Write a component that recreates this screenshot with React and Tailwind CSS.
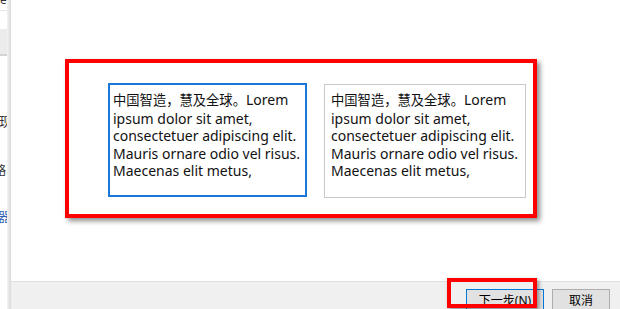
import React from 'react';

const SampleText = () => (
  <>
    <span className="text-[13.3px]">中国智造，慧及全球。</span>Lorem ipsum dolor sit amet, consectetuer adipiscing elit. Mauris ornare odio vel risus. Maecenas elit metus,
  </>
);

const font = "font-['Segoe_UI','Noto_Sans','Noto_Sans_CJK_SC',sans-serif]";

const App = () => {
  return (
    <div className={`relative flex w-[620px] h-[309px] overflow-hidden bg-white ${font} text-black`}>
      {/* 后面窗口露出的一条 */}
      <div className="relative w-[11px] shrink-0 overflow-hidden bg-white">
        <div className="absolute left-0 top-[-6px] text-[12px] leading-[12px] text-[#333]">ect</div>
        <div className="absolute left-0 top-[10px] w-full h-px bg-[#e6e6e6]"></div>
        <div className="absolute left-0 top-[29px] w-full h-[27px] bg-[#ebebeb] border-b-2 border-[#d4d4d4]"></div>
        <div className="absolute left-[-1px] top-[114px] text-[13px] leading-[14px] text-[#333]">现</div>
        <div className="absolute left-[-6px] top-[164px] text-[12px] leading-[14px] text-[#333]">略</div>
        <div className="absolute left-[-2px] top-[209px] text-[13px] leading-[14px] text-[#2a5fb5]">器</div>
        <div className="absolute right-0 top-0 h-full w-[4px] bg-gradient-to-r from-[#f3f3f3] to-[#d9d9d9]"></div>
      </div>

      {/* 对话框 */}
      <div className="flex flex-col flex-1 min-w-0">
        <div className="flex-1 pl-[54px] pt-[59px]">
          <div className="w-[472px] h-[159px] border-4 border-[#ff0000] shadow-[3px_3px_5px_rgba(0,0,0,0.45)] pl-[39px] pt-[20px] flex gap-[17px]">
            <div className="w-[199px] h-[114px] border-2 border-[#1c78d6] pl-[3px] pt-[6px] text-[14px] leading-[17.5px] text-[#111]">
              <SampleText />
            </div>
            <div className="w-[202px] h-[114px] mt-px border border-[#c9c9c9] pl-[6px] pt-[6px] text-[14px] leading-[17.5px] text-[#111]">
              <SampleText />
            </div>
          </div>
        </div>

        <div className="h-[28px] shrink-0 bg-[#f0f0f0] border-t border-[#dfdfdf] flex justify-end pr-[10px] pt-[7px] gap-[8px] text-[12px]">
          <button className="w-[78px] h-[23px] border border-[#0078d7] bg-[#e1e1e1] leading-[21px] text-[#000]">
            下一步(N)
          </button>
          <button className="w-[58px] h-[23px] border border-[#adadad] bg-[#e1e1e1] leading-[21px] text-[#000]">
            取消
          </button>
        </div>
      </div>

      {/* 红框标注 */}
      <div className="absolute left-[447px] top-[278px] w-[90px] h-[30px] border-4 border-[#ff0000] shadow-[2px_2px_4px_rgba(0,0,0,0.4)]"></div>
    </div>
  );
};

export default App;
